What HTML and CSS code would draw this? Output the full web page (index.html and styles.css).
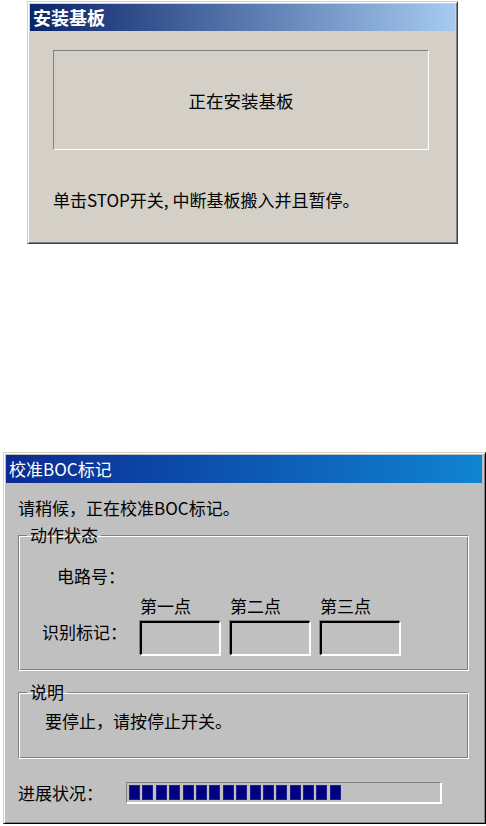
FILE: index.html
```html
<!DOCTYPE html>
<html lang="zh-CN">
<head>
  <meta charset="UTF-8">
  <title>基板对话框</title>
  <link rel="stylesheet" href="styles.css">
</head>
<body>

  <div class="win win-install">
    <div class="title title-install">安装基板</div>
    <div class="install-body">
      <div class="status-panel">正在安装基板</div>
      <p class="hint">单击STOP开关, 中断基板搬入并且暂停。</p>
    </div>
  </div>

  <div class="win win-boc">
    <div class="title title-boc">校准BOC标记</div>
    <div class="boc-body">
      <p class="wait">请稍候，正在校准BOC标记。</p>

      <fieldset class="group group-state">
        <legend>动作状态</legend>
        <div class="row-circuit">电路号：</div>
        <div class="row-marks">
          <span class="marks-label">识别标记：</span>
          <div class="mark">
            <span>第一点</span>
            <div class="field"></div>
          </div>
          <div class="mark">
            <span>第二点</span>
            <div class="field"></div>
          </div>
          <div class="mark">
            <span>第三点</span>
            <div class="field"></div>
          </div>
        </div>
      </fieldset>

      <fieldset class="group group-note">
        <legend>说明</legend>
        <div class="note">要停止，请按停止开关。</div>
      </fieldset>

      <div class="progress-row">
        <span class="progress-label">进展状况：</span>
        <div class="progress">
          <i></i><i></i><i></i><i></i><i></i><i></i><i></i><i></i>
          <i></i><i></i><i></i><i></i><i></i><i></i><i></i><i></i>
        </div>
      </div>
    </div>
  </div>

</body>
</html>
```

FILE: styles.css
```css
body {
  margin: 0;
  background-color: #ffffff;
  font-family: 'Noto Sans CJK SC', 'DejaVu Sans', sans-serif;
  font-size: 17px;
  color: #000000;
}

p {
  margin: 0;
}

.win {
  box-sizing: border-box;
  border-top: 1px solid #d4d0c8;
  border-left: 1px solid #d4d0c8;
  border-right: 1px solid #404040;
  border-bottom: 1px solid #404040;
  box-shadow: inset 1px 1px 0 #ffffff, inset -1px -1px 0 #808080;
  padding: 2px;
}

.title {
  color: white;
  line-height: 27px;
  height: 27px;
  padding-left: 3px;
  white-space: nowrap;
}

/* first dialog */
.win-install {
  margin: 1px 0 0 27px;
  width: 431px;
  height: 243px;
  background-color: #d4d0c8;
}

.title-install {
  background: linear-gradient(to right, #0a246a, #a6caf0);
  font-weight: bold;
  font-size: 18px;
}

.install-body {
  padding: 19px 26px 0 23px;
}

.status-panel {
  height: 98px;
  border-top: 1px solid #808080;
  border-left: 1px solid #808080;
  border-right: 1px solid #ffffff;
  border-bottom: 1px solid #ffffff;
  display: flex;
  align-items: center;
  justify-content: center;
  font-size: 17.5px;
}

.hint {
  margin-top: 40px;
  line-height: 20px;
}

/* second dialog */
.win-boc {
  margin: 208px 0 0 3px;
  width: 483px;
  height: 372px;
  background-color: #c0c0c0;
  border-bottom-color: #000000;
  border-right-color: #000000;
}

.title-boc {
  background: linear-gradient(to right, #0a2a92, #1084d0);
  font-size: 17px;
  height: 28px;
  line-height: 28px;
  margin-right: 1px;
}

.boc-body {
  padding: 14px 14px 0 12px;
}

.wait {
  line-height: 22px;
}

.group {
  box-sizing: border-box;
  margin: 0;
  padding: 0;
  border-top: 1px solid #808080;
  border-left: 1px solid #808080;
  border-right: 1px solid #ffffff;
  border-bottom: 1px solid #ffffff;
  box-shadow: inset 1px 1px 0 #ffffff, inset -1px -1px 0 #808080;
}

.group legend {
  margin-left: 8px;
  padding: 0 3px;
  line-height: 20px;
}

.group-state {
  height: 146px;
  margin-top: 6px;
}

.row-circuit {
  margin: 21px 0 0 38px;
  line-height: 20px;
}

.row-marks {
  display: flex;
  align-items: flex-end;
  margin: 10px 0 0 23px;
}

.marks-label {
  width: 98px;
  line-height: 20px;
  margin-bottom: 13px;
}

.mark {
  display: flex;
  flex-direction: column;
  margin-right: 10px;
}

.mark span {
  line-height: 20px;
  margin-bottom: 5px;
}

.field {
  box-sizing: border-box;
  width: 80px;
  height: 34px;
  border-top: 2px solid #000000;
  border-left: 2px solid #000000;
  border-right: 1px solid #ffffff;
  border-bottom: 1px solid #ffffff;
  box-shadow: -1px -1px 0 #808080, 1px 1px 0 #ffffff;
}

.group-note {
  height: 77px;
  margin-top: 11px;
}

.note {
  margin: 8px 0 0 26px;
  line-height: 22px;
}

.progress-row {
  display: flex;
  align-items: center;
  margin-top: 23px;
}

.progress-label {
  width: 108px;
  line-height: 20px;
}

.progress {
  box-sizing: border-box;
  width: 316px;
  height: 22px;
  border-top: 1px solid #808080;
  border-left: 1px solid #808080;
  border-right: 2px solid #ffffff;
  border-bottom: 2px solid #ffffff;
  display: flex;
  gap: 2.4px;
  padding: 2px 2px;
}

.progress i {
  box-sizing: border-box;
  width: 11px;
  background-color: #000080;
  border: 1px solid #202088;
}
```
